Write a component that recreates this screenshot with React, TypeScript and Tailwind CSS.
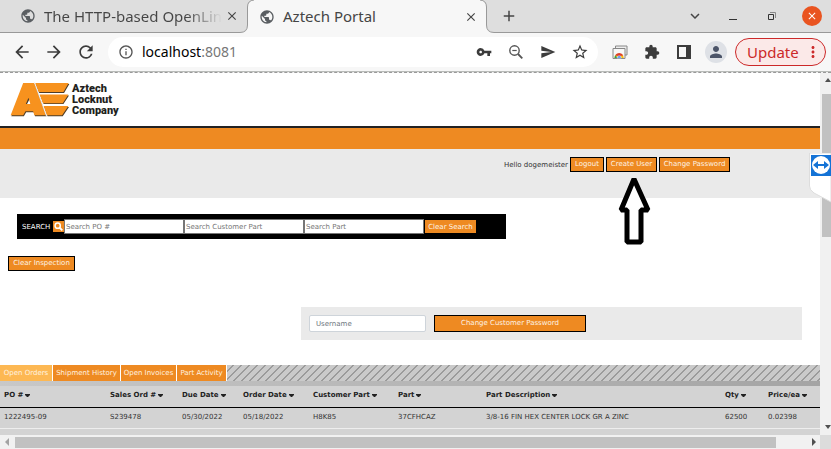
import type { ReactNode } from "react";
import {
  MdAdd,
  MdArrowBack,
  MdArrowForward,
  MdClose,
  MdExtension,
  MdInfoOutline,
  MdKeyboardArrowDown,
  MdMoreVert,
  MdPerson,
  MdPublic,
  MdRefresh,
  MdSend,
  MdStarBorder,
  MdVpnKey,
} from "react-icons/md";

const columns = [
  { label: "PO #", width: "w-[106px]" },
  { label: "Sales Ord #", width: "w-[72px]" },
  { label: "Due Date", width: "w-[61px]" },
  { label: "Order Date", width: "w-[70px]" },
  { label: "Customer Part", width: "w-[85px]" },
  { label: "Part", width: "w-[88px]" },
  { label: "Part Description", width: "" },
  { label: "Qty", width: "w-[43px]" },
  { label: "Price/ea", width: "w-[56px]" },
];

const orders = [
  ["1222495-09", "S239478", "05/30/2022", "05/18/2022", "H8K85", "37CFHCAZ", "3/8-16 FIN HEX CENTER LOCK GR A ZINC", "62500", "0.02398"],
];

const tabs = [
  { label: "Open Orders", style: "w-[53px] bg-[#fdb853]" },
  { label: "Shipment History", style: "w-[68px] bg-[#ee8a22]" },
  { label: "Open Invoices", style: "w-[56px] bg-[#ee8a22]" },
  { label: "Part Activity", style: "w-[50px] bg-[#ee8a22]" },
];

function GlobeIcon() {
  return <MdPublic className="size-4 shrink-0 text-[#5a5e62]" />;
}

function TabCurve({ flip = false }: { flip?: boolean }) {
  return (
    <svg viewBox="0 0 16 33" className={flip ? "h-[33px] w-4 shrink-0 -scale-x-100" : "h-[33px] w-4 shrink-0"}>
      <path d="M0 32.5Q7.5 32.5 7.5 25V7Q7.5 .5 14 0H16V33H0Z" fill="#f7f7f7" />
      <path d="M0 32.5Q7.5 32.5 7.5 25V7Q7.5 .5 14 0" fill="none" stroke="#999" />
    </svg>
  );
}

function IconButton({ label, children, className = "w-8" }: { label: string; children: ReactNode; className?: string }) {
  return (
    <button type="button" aria-label={label} className={`flex h-7 shrink-0 items-center justify-center ${className}`}>
      {children}
    </button>
  );
}

function OrangeButton({ children, className }: { children: ReactNode; className: string }) {
  return (
    <button type="button" className={`border border-black bg-[#ee8a22] pb-px text-center whitespace-nowrap text-[#fdf3e6] ${className}`}>
      {children}
    </button>
  );
}

function BrowserTabs() {
  return (
    <div className="flex h-[33px] bg-[#dedede] text-[15px] text-[#454545]">
      <div className="flex w-60 shrink-0 items-center border-b border-[#999] pl-5">
        <GlobeIcon />
        <span className="ml-2 w-[178px] bg-gradient-to-r from-[#454545] from-80% to-transparent bg-clip-text whitespace-nowrap text-transparent">
          The HTTP-based OpenLin
        </span>
        <button type="button" aria-label="Close The HTTP-based OpenLin" className="ml-[3px]">
          <MdClose className="size-3.5" />
        </button>
      </div>
      <TabCurve />
      <div className="flex w-[222px] shrink-0 items-center bg-[#f7f7f7] pl-[3px]">
        <GlobeIcon />
        <span className="ml-2 flex-1 whitespace-nowrap">Aztech Portal</span>
        <button type="button" aria-label="Close Aztech Portal">
          <MdClose className="size-3.5" />
        </button>
      </div>
      <TabCurve flip />
      <div className="flex min-w-0 flex-1 items-center border-b border-[#999] pl-1.5">
        <IconButton label="New tab" className="w-[18px]"><MdAdd className="size-[18px]" /></IconButton>
        <div className="flex-1" />
        <IconButton label="Search tabs"><MdKeyboardArrowDown className="size-[18px]" /></IconButton>
        <IconButton label="Minimize" className="w-11"><span className="mt-1.5 h-px w-2 bg-[#333]" /></IconButton>
        <IconButton label="Restore" className="w-[34px]">
          <svg viewBox="0 0 8 8" className="size-2" fill="none" stroke="#333">
            <path d="M.5 2.5H5.5V7.5H.5Z" />
            <path d="M2 .5H7.5V6" stroke="#888" />
          </svg>
        </IconButton>
        <IconButton label="Close window" className="mr-[9px] ml-[13px] w-5">
          <span className="flex size-5 items-center justify-center rounded-full bg-[#e95420]">
            <MdClose className="size-3 text-white" />
          </span>
        </IconButton>
      </div>
    </div>
  );
}

function Toolbar() {
  return (
    <div className="flex h-[38px] items-center bg-[#f7f7f7] pl-1.5 text-[#3c3c3c]">
      <IconButton label="Back"><MdArrowBack className="size-5" /></IconButton>
      <IconButton label="Forward"><MdArrowForward className="size-5" /></IconButton>
      <IconButton label="Reload"><MdRefresh className="size-5" /></IconButton>
      <div className="ml-1.5 flex h-[30px] min-w-0 flex-1 items-center rounded-full bg-white pl-2.5">
        <MdInfoOutline className="size-4 shrink-0 text-[#555]" />
        <div className="ml-2 flex-1 text-sm">
          <span className="text-black">localhost</span>
          <span className="text-[#777]">:8081</span>
        </div>
        <IconButton label="Passwords"><MdVpnKey className="size-4" /></IconButton>
        <IconButton label="Zoom">
          <svg viewBox="0 0 14 14" className="size-3.5" fill="none" stroke="#555">
            <circle cx="5.5" cy="5.5" r="4.7" strokeWidth="1.4" />
            <path d="M9 9L13.3 13.3" strokeWidth="1.8" />
            <path d="M3.3 5.5H7.7" strokeWidth="1.2" />
          </svg>
        </IconButton>
        <IconButton label="Share"><MdSend className="size-4" /></IconButton>
        <IconButton label="Bookmark"><MdStarBorder className="size-[18px]" /></IconButton>
        <div className="w-0.5" />
      </div>
      <IconButton label="Screenshots" className="ml-1.5 w-8">
        <svg viewBox="0 0 16 16" className="size-4">
          <path d="M3.5 2H15V11H3.5Z" fill="#eee" stroke="#888" />
          <path d="M1 4.5H13V14.5H1Z" fill="#f7f7f7" stroke="#888" />
          <path d="M2.5 14A4.6 4.6 0 0 1 11.7 14Z" fill="#fbbc05" />
          <path d="M3 11.5A4.7 4.7 0 0 1 11.4 11.5L7.2 12Z" fill="#dc3c30" />
          <path d="M3 11.3L5.5 14H2.5Z" fill="#2d9e50" />
          <path d="M5 14A2.2 2.2 0 0 1 9.4 14Z" fill="#4285f4" stroke="#fff" strokeWidth=".5" />
        </svg>
      </IconButton>
      <IconButton label="Extensions"><MdExtension className="size-4" /></IconButton>
      <IconButton label="Side panel">
        <svg viewBox="0 0 14 14" className="size-3.5">
          <path d="M0 0H14V14H0ZM2 2V12H9V2Z" fill="#3c3c3c" fillRule="evenodd" />
        </svg>
      </IconButton>
      <IconButton label="Profile">
        <span className="flex size-[22px] items-center justify-center rounded-full bg-[#dee1e6]">
          <MdPerson className="size-[18px] text-[#4b5468]" />
        </span>
      </IconButton>
      <button type="button" className="mr-[5px] ml-[3px] flex h-7 w-[91px] shrink-0 items-center rounded-full border border-[#cc2929] bg-[#fbe9e8] pl-[11px] text-[15px] text-[#cc2929]">
        <span className="flex-1 text-left">Update</span>
        <MdMoreVert className="mr-[3px] size-[18px]" />
      </button>
    </div>
  );
}

function Logo() {
  return (
    <div className="flex h-[53px] items-center gap-0.5 pl-2.5">
      <svg viewBox="28 36 182 104" className="h-[35px] w-[60px] shrink-0">
        <g fill="#4d3c28" transform="translate(2 3)">
          <path d="M30 136L68 38H102L137 136H102L98 124H75L68 136ZM86 83L76 102H90Z" fillRule="evenodd" />
          <path d="M104 38H206L190 65H115ZM118 73H205L188 99H128ZM130 108H205L186 136H140Z" />
        </g>
        <g fill="#f7921e">
          <path d="M30 136L68 38H102L137 136H102L98 124H75L68 136ZM84 83L76 102H90Z" fillRule="evenodd" />
          <path d="M104 38H206L190 65H115ZM118 73H205L188 99H128ZM130 108H205L186 136H140Z" />
        </g>
        <path d="M102 36L139 139" stroke="#eee" strokeWidth="3" />
      </svg>
      <div className="font-['Roboto','Open_Sans',sans-serif] text-[11px] leading-[11px] font-black text-[#231f20]">
        <div>Aztech</div>
        <div>Locknut</div>
        <div>Company</div>
      </div>
    </div>
  );
}

function SearchBar() {
  return (
    <form className="ml-[17px] flex h-[25px] w-[489px] items-center bg-black pl-[5px]">
      <span className="w-[31px] text-white">SEARCH</span>
      <button type="button" aria-label="Search" className="flex h-[11px] w-[11px] items-center justify-center bg-[#ee8a22]">
        <svg viewBox="0 0 9 9" className="size-[9px]" fill="none" stroke="#fff">
          <circle cx="3.7" cy="3.7" r="2.6" strokeWidth="1.5" />
          <path d="M5.5 5.5L8.3 8.3" strokeWidth="1.8" />
        </svg>
      </button>
      {["Search PO #", "Search Customer Part", "Search Part"].map((label) => (
        <input
          key={label}
          type="text"
          aria-label={label}
          placeholder={label}
          className="h-[15px] w-[120px] border border-[#767676] bg-white px-px placeholder:text-[#757575]"
        />
      ))}
      <button type="button" className="ml-px h-[13px] w-[51px] bg-[#ee8a22] whitespace-nowrap text-[#fdf3e6]">
        Clear Search
      </button>
    </form>
  );
}

function OrdersTable() {
  return (
    <table className="w-full table-fixed border-collapse bg-[#d3d3d3] text-left">
      <thead>
        <tr className="h-[21px] border-b border-black text-[#222]">
          {columns.map((column) => (
            <th key={column.label} scope="col" className={`py-0 pr-0 pb-0.5 pl-1 font-bold whitespace-nowrap ${column.width}`}>
              {column.label}
              <svg viewBox="0 0 5 3" className="ml-0.5 inline h-[3px] w-[5px]">
                <path d="M0 0H5V1L3 3H2L0 1Z" fill="#222" />
              </svg>
            </th>
          ))}
        </tr>
      </thead>
      <tbody className="text-[#333]">
        {orders.map((order) => (
          <tr key={order[0]} className="h-[21px] border-b border-[#eee]">
            {order.map((cell, index) => (
              <td key={columns[index].label} className="py-0 pr-0 pb-0.5 pl-1 whitespace-nowrap">
                {cell}
              </td>
            ))}
          </tr>
        ))}
        <tr className="h-[21px]">
          <td colSpan={columns.length} />
        </tr>
      </tbody>
    </table>
  );
}

function Portal() {
  return (
    <main className="min-w-0 flex-1 overflow-hidden bg-white font-['DejaVu_Sans','Noto_Sans',sans-serif] text-[7px] leading-[10px] text-[#333]">
      <Logo />
      <div className="h-[23px] border-t-2 border-[#222] bg-[#ee8a22]" />
      <div className="flex h-[49px] items-start justify-end gap-0.5 bg-[#eaeaea] pt-2 pr-[90px]">
        <span className="pt-[3px]">Hello dogemeister</span>
        <OrangeButton className="h-[15px] w-[34px]">Logout</OrangeButton>
        <div className="relative">
          <OrangeButton className="h-[15px] w-[51px]">Create User</OrangeButton>
          <svg viewBox="0 0 33 70" className="absolute top-[18px] left-3 h-[70px] w-[33px]">
            <path d="M16 4L3 35H9V67H23V35H30Z" fill="#fff" stroke="#000" strokeWidth="5" strokeLinejoin="bevel" />
          </svg>
        </div>
        <OrangeButton className="h-[15px] w-[71px]">Change Password</OrangeButton>
      </div>
      <div className="pt-4">
        <SearchBar />
      </div>
      <div className="flex pt-[17px] pl-2">
        <OrangeButton className="h-[15px] w-[67px]">Clear Inspection</OrangeButton>
      </div>
      <form className="mt-9 mr-[18px] ml-[301px] flex h-[33px] items-center gap-2 bg-[#eaeaea] pl-2">
        <input
          type="text"
          aria-label="Username"
          placeholder="Username"
          className="h-[17px] w-[117px] rounded-[2px] border border-[#ced4da] bg-white px-1.5 placeholder:text-[#6c757d]"
        />
        <OrangeButton className="h-[17px] w-[152px]">Change Customer Password</OrangeButton>
      </form>
      <div className="mt-[25px] flex h-4 bg-[linear-gradient(135deg,#9b9b9b_16%,#cacaca_16%,#cacaca_50%,#9b9b9b_50%,#9b9b9b_66%,#cacaca_66%)] bg-[length:8px_8px]">
        {tabs.map((tab) => (
          <button key={tab.label} type="button" className={`shrink-0 border-r border-white pb-px text-center whitespace-nowrap text-[#fff3e0] ${tab.style}`}>
            {tab.label}
          </button>
        ))}
      </div>
      <div className="h-[5px] bg-gradient-to-r from-[#c8c8c8] to-[#a4a4a4]" />
      <OrdersTable />
    </main>
  );
}

export default function App() {
  return (
    <div className="relative flex h-screen flex-col overflow-hidden bg-[#f1f1f1] font-['Noto_Sans','Open_Sans',sans-serif]">
      <header className="shrink-0 border-b border-dashed border-[#999]">
        <BrowserTabs />
        <Toolbar />
        <div className="h-px bg-[#b9bcb9]" />
      </header>
      <div className="flex min-h-0 flex-1">
        <Portal />
        <div className="flex w-[11px] shrink-0 flex-col items-center pt-[5px] pb-1.5">
          <svg viewBox="0 0 6 4" className="ml-1 h-1 w-1.5"><path d="M0 4L3 0L6 4Z" fill="#505050" /></svg>
          <div className="mt-3 ml-0.5 h-[143px] w-[9px] bg-[#c1c1c1]" />
          <div className="flex-1" />
          <svg viewBox="0 0 6 4" className="ml-1 h-1 w-1.5"><path d="M0 0L3 4L6 0Z" fill="#505050" /></svg>
        </div>
      </div>
      <div className="flex h-3.5 shrink-0">
        <div className="flex flex-1 items-center pr-1 pl-[5px]">
          <svg viewBox="0 0 4 8" className="h-2 w-1"><path d="M4 0L0 4L4 8Z" fill="#a3a3a3" /></svg>
          <div className="mr-9 ml-1.5 h-[11px] flex-1 bg-[#c1c1c1]" />
          <svg viewBox="0 0 4 8" className="h-2 w-1"><path d="M0 0L4 4L0 8Z" fill="#505050" /></svg>
        </div>
        <div className="w-[11px] bg-[#dcdcdc]" />
      </div>
      <svg viewBox="0 0 22 50" className="absolute top-[153px] right-0 h-[50px] w-[22px]">
        <path d="M.5 0H22V49L5 40Q.5 37 .5 33Z" fill="#fff" stroke="#ddd" />
        <path d="M2 2H22V23H2Z" fill="#1473d6" />
        <circle cx="12" cy="12" r="9" fill="#fff" />
        <path d="M4 12L9 8V11H15V8L20 12L15 16V13H9V16Z" fill="#1473d6" />
      </svg>
    </div>
  );
}
